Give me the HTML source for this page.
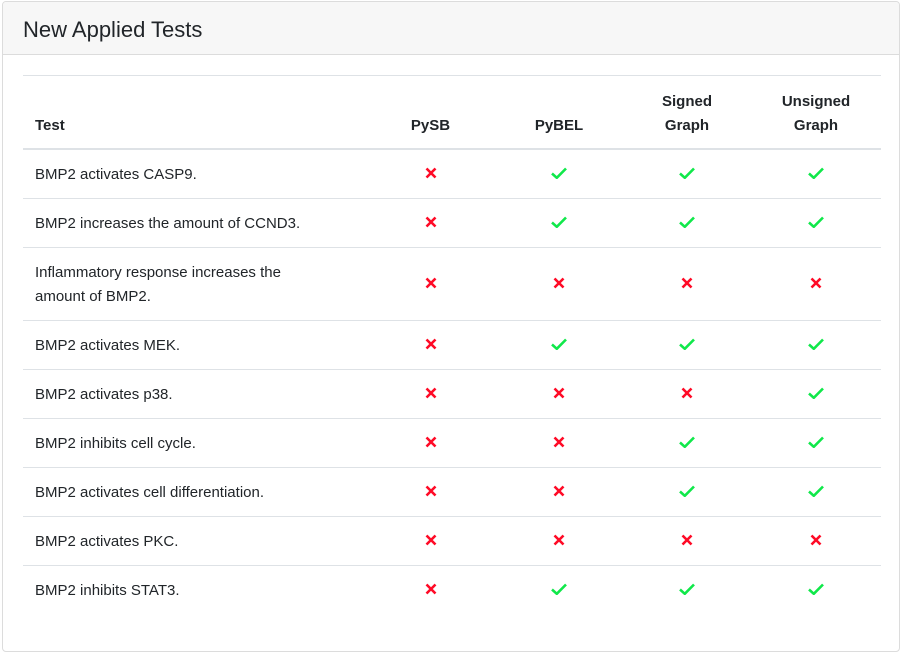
<!DOCTYPE html>
<html><head><style>
body{margin:0;background:#fff;font-family:"Liberation Sans",Helvetica,Arial,sans-serif;color:#212529;}
.card{position:absolute;left:2px;top:1px;width:896px;height:649px;border:1px solid #dcdcdc;border-radius:4px;overflow:hidden;}
.hd{height:52px;background:#f7f7f7;border-bottom:1px solid #dcdcdc;}
.hd h3{margin:0;font-weight:400;font-size:22px;position:absolute;left:20px;top:15px;line-height:26px;}
table{position:absolute;left:20px;top:73px;width:858px;border-collapse:collapse;font-size:15px;table-layout:fixed;}
td,th{border-top:1px solid #dee2e6;padding:0 12px;vertical-align:middle;line-height:24px;}
th{font-weight:700;height:62px;border-bottom:2px solid #dee2e6;text-align:center;vertical-align:bottom;padding-bottom:10px;}
th:first-child,td:first-child{text-align:left;}
td{height:48px;text-align:center;}
td:first-child{padding-top:2px;height:46px;}
td svg{vertical-align:-1px;}
tr.tall td{height:72px;}
tr.tall td:first-child{height:70px;}
</style></head><body>
<div class="card"><div class="hd"><h3>New Applied Tests</h3></div>
<svg width="0" height="0" style="position:absolute"><defs>
<symbol id="x" viewBox="0 0 12 12"><path d="M1.5 1.5L10.5 10.5M10.5 1.5L1.5 10.5" stroke="#ff0a26" stroke-width="2.6"/></symbol>
<symbol id="c" viewBox="0 0 16 12"><path d="M1 6.5L5.8 10.8L15 1.5" stroke="#10e84a" stroke-width="2.6" fill="none"/></symbol>
</defs></svg>
<table>
<colgroup><col style="width:343px"><col style="width:129px"><col style="width:128px"><col style="width:128px"><col style="width:130px"></colgroup>
<tr><th>Test</th><th>PySB</th><th>PyBEL</th><th>Signed<br>Graph</th><th>Unsigned<br>Graph</th></tr>
<tr><td>BMP2 activates CASP9.</td><td>X</td><td>C</td><td>C</td><td>C</td></tr>
<tr><td>BMP2 increases the amount of CCND3.</td><td>X</td><td>C</td><td>C</td><td>C</td></tr>
<tr class="tall"><td>Inflammatory response increases the<br>amount of BMP2.</td><td>X</td><td>X</td><td>X</td><td>X</td></tr>
<tr><td>BMP2 activates MEK.</td><td>X</td><td>C</td><td>C</td><td>C</td></tr>
<tr><td>BMP2 activates p38.</td><td>X</td><td>X</td><td>X</td><td>C</td></tr>
<tr><td>BMP2 inhibits cell cycle.</td><td>X</td><td>X</td><td>C</td><td>C</td></tr>
<tr><td>BMP2 activates cell differentiation.</td><td>X</td><td>X</td><td>C</td><td>C</td></tr>
<tr><td>BMP2 activates PKC.</td><td>X</td><td>X</td><td>X</td><td>X</td></tr>
<tr><td>BMP2 inhibits STAT3.</td><td>X</td><td>C</td><td>C</td><td>C</td></tr>
</table>
</div>
<script>
document.querySelectorAll('td:not(:first-child)').forEach(function(td){
 var t=td.textContent.trim();
 td.innerHTML = t==='X' ? '<svg width="12" height="12"><use href="#x"/></svg>' : '<svg width="16" height="12"><use href="#c"/></svg>';
});
</script>
</body></html>
